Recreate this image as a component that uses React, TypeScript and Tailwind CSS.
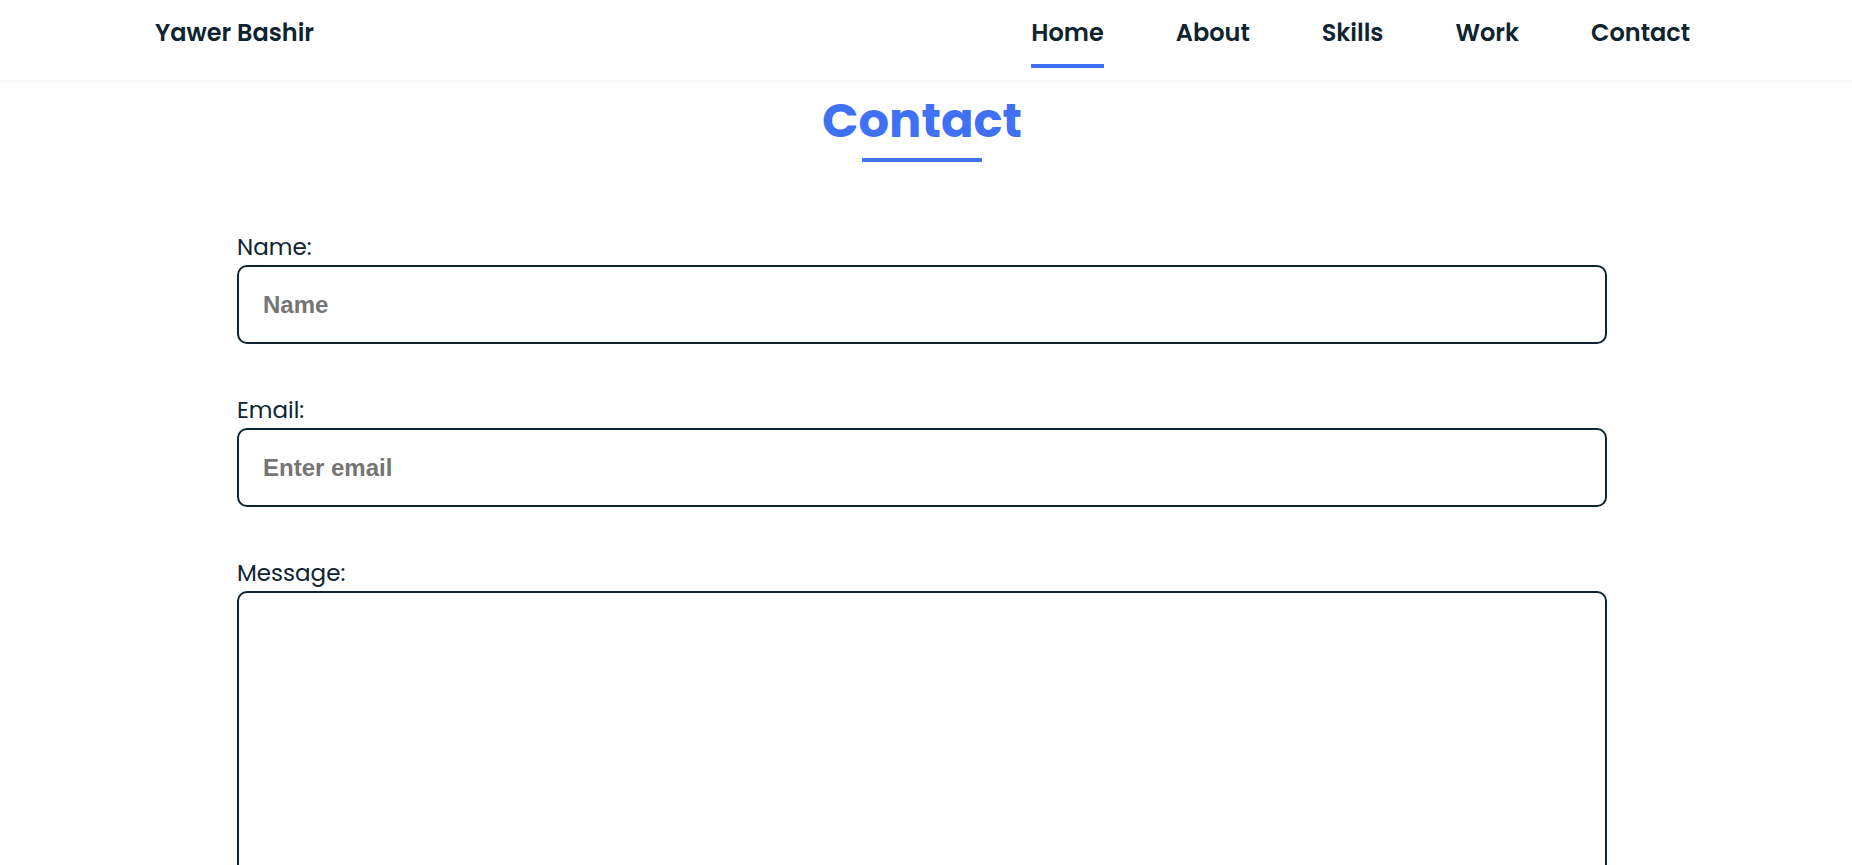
const links = [
  { name: 'Home', active: true },
  { name: 'About' },
  { name: 'Skills' },
  { name: 'Work' },
  { name: 'Contact' },
];

const font = "font-['Poppins','Noto_Sans',sans-serif]";

function Field({ label, placeholder }: { label: string; placeholder: string }) {
  return (
    <div className="mb-[48px] flex flex-col">
      <label className="text-[23px] leading-[36px] text-[#0e2431]">{label}</label>
      <input
        type="text"
        placeholder={placeholder}
        className="h-[79px] rounded-[10px] border-2 border-[#0e2431] px-[24px] font-['Liberation_Sans',Arial,sans-serif] text-[24px] font-bold text-[#0e2431] outline-none placeholder:text-[#757575]"
      />
    </div>
  );
}

export default function App() {
  return (
    <div className={`min-h-screen bg-white ${font}`}>
      <header className="flex h-[80px] items-start justify-between pl-[155px] pr-[162px] shadow-[0_1px_4px_rgba(146,161,176,0.15)]">
        <span className="mt-[15px] text-[24px] font-semibold leading-[36px] text-[#0e2431]">Yawer Bashir</span>
        <nav className="flex items-start gap-[72px]">
          {links.map((l) => (
            <a
              key={l.name}
              href="#"
              className="relative mt-[15px] text-[24px] font-semibold leading-[36px] text-[#0e2431]"
            >
              {l.name}
              {l.active && (
                <span className="absolute left-0 right-0 top-[49px] h-[4px] bg-[#4070f4]" />
              )}
            </a>
          ))}
        </nav>
      </header>

      <section className="ml-[237px] w-[1370px] pt-[9px]">
        <div className="flex flex-col items-center">
          <h2 className="text-[48px] font-bold leading-[64px] text-[#4070f4]">Contact</h2>
          <div className="mt-[5px] h-[4px] w-[120px] bg-[#4070f4]" />
        </div>

        <form className="mt-[67px]">
          <Field label="Name:" placeholder="Name" />
          <Field label="Email:" placeholder="Enter email" />
          <div className="flex flex-col">
            <label className="text-[23px] leading-[36px] text-[#0e2431]">Message:</label>
            <textarea className="h-[360px] resize-none rounded-[10px] border-2 border-[#0e2431] p-[24px] outline-none" />
          </div>
        </form>
      </section>
    </div>
  );
}
